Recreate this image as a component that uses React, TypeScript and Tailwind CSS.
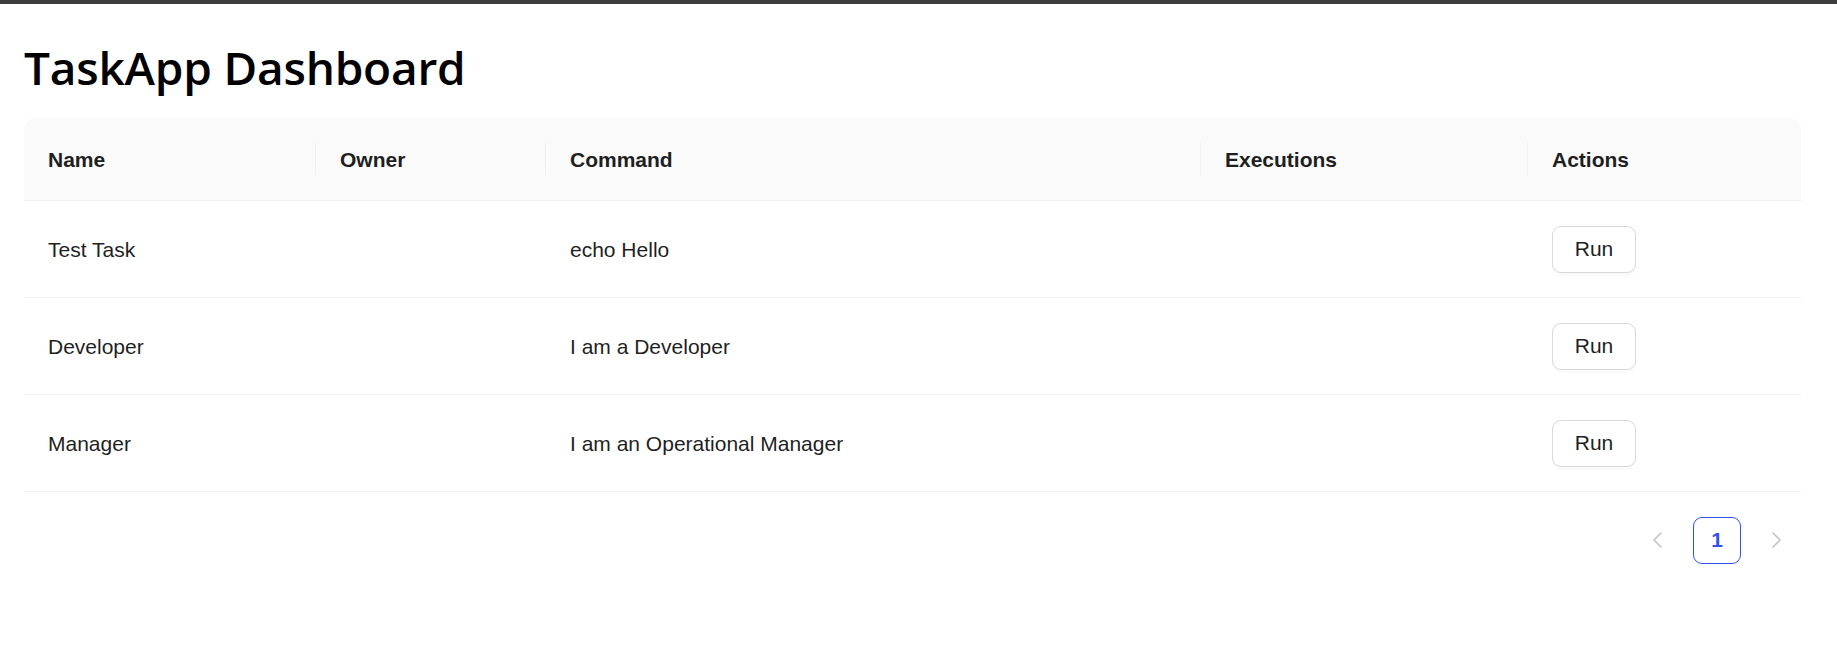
import React from 'react';

interface Task {
  name: string;
  owner: string;
  command: string;
  executions: string;
}

const tasks: Task[] = [
  { name: 'Test Task', owner: '', command: 'echo Hello', executions: '' },
  { name: 'Developer', owner: '', command: 'I am a Developer', executions: '' },
  { name: 'Manager', owner: '', command: 'I am an Operational Manager', executions: '' },
];

const cols = 'grid grid-cols-[292px_230px_655px_327px_1fr]';

const HeadCell: React.FC<{ title: string; divider?: boolean }> = ({ title, divider = true }) => (
  <div className="flex items-center justify-between">
    <span className="pl-6 pt-0.5">{title}</span>
    {divider && <span className="w-px h-8 bg-[#f0f0f0]"></span>}
  </div>
);

const Chevron: React.FC<{ dir: 'left' | 'right' }> = ({ dir }) => (
  <svg width="12" height="18" viewBox="0 0 12 18" fill="none">
    <polyline
      points={dir === 'left' ? '10,2 3,9 10,16' : '2,2 9,9 2,16'}
      stroke="#c4c4c4"
      strokeWidth="1.6"
      strokeLinejoin="round"
      strokeLinecap="round"
    />
  </svg>
);

export default function App() {
  return (
    <div className="min-h-screen bg-white font-['Liberation_Sans',Arial,sans-serif] text-[#1f1f1f]">
      <div className="h-1 bg-[#3d3d3d]"></div>
      <div className="pl-6 pr-9 pt-8">
        <h1 className="font-['Open_Sans',sans-serif] font-semibold text-[46px] leading-[62px] text-black mb-5 tracking-[-0.2px]">
          TaskApp Dashboard
        </h1>

        {/* Table */}
        <div className="text-[21px]">
          <div className={`${cols} h-[83px] bg-[#fafafa] rounded-t-[12px] border-b border-[#f0f0f0] font-bold`}>
            <HeadCell title="Name" />
            <HeadCell title="Owner" />
            <HeadCell title="Command" />
            <HeadCell title="Executions" />
            <HeadCell title="Actions" divider={false} />
          </div>
          {tasks.map((t, idx) => (
            <div key={idx} className={`${cols} h-[97px] border-b border-[#f0f0f0] items-center`}>
              <div className="px-6 pt-0.5">{t.name}</div>
              <div className="px-6 pt-0.5">{t.owner}</div>
              <div className="px-6 pt-0.5">{t.command}</div>
              <div className="px-6 pt-0.5">{t.executions}</div>
              <div className="px-6">
                <button className="w-[84px] h-[47px] border border-[#d9d9d9] rounded-[9px] bg-white shadow-[0_3px_0_rgba(0,0,0,0.02)] text-[21px]">
                  Run
                </button>
              </div>
            </div>
          ))}
        </div>

        {/* Pagination */}
        <div className="flex justify-end items-center gap-3 mt-6">
          <div className="w-12 h-12 flex items-center justify-center">
            <Chevron dir="left" />
          </div>
          <div className="w-12 h-[47px] flex items-center justify-center border border-[#3450f0] rounded-[9px] text-[#3450f0] font-bold text-[21px]">
            1
          </div>
          <div className="w-12 h-12 flex items-center justify-center">
            <Chevron dir="right" />
          </div>
        </div>
      </div>
    </div>
  );
}
